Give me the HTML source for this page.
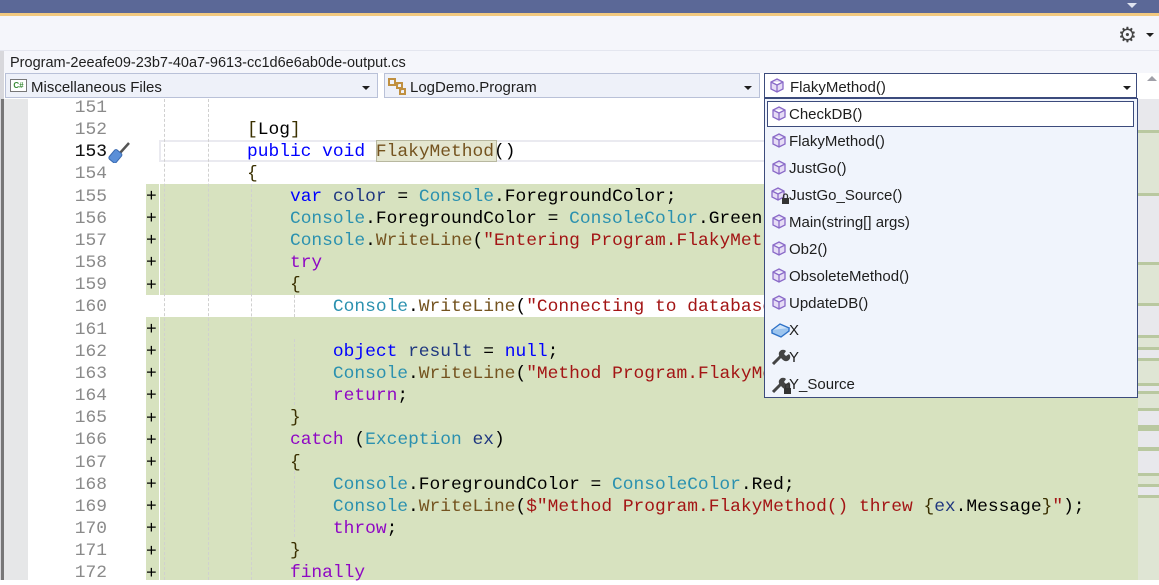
<!DOCTYPE html>
<html><head><meta charset="utf-8"><style>
*{margin:0;padding:0;box-sizing:border-box}
body{width:1159px;height:580px;overflow:hidden;background:#fff;position:relative;font-family:"Liberation Sans",sans-serif}
.a{position:absolute}
.code{font-family:"Liberation Mono",monospace;font-size:17.9px;white-space:pre;line-height:22px}
.ln{color:#8a8a8a;text-align:right;width:60px;left:47px}
.k{color:#0000ff}.t{color:#2b91af}.s{color:#a31515}.c{color:#8f08c4}.m{color:#74531f}.v{color:#1f377f}.b{color:#3a3000}
.cb{background:#eef1f9;border:1px solid #b9c1d8;height:25px;top:73px;font-size:15px;color:#1e1e1e}
.cb span.tx{position:absolute;left:25px;top:5px}
.arr{position:absolute;width:0;height:0;border-left:4px solid transparent;border-right:4px solid transparent;border-top:4px solid #1e1e1e}
.it{position:absolute;left:4px;height:26px;width:367px;font-size:15px;color:#1e1e1e}
.it span{position:absolute;left:20px;top:5px}
.it svg{position:absolute;left:2px;top:5px}
.guide{position:absolute;width:0;border-left:1px dashed #d0d0d0}
</style></head><body>
<div class="a" style="left:0;top:0;width:1159px;height:13px;background:#5b6897"></div>
<div class="a" style="left:0;top:13px;width:1159px;height:3px;background:#f2c97f"></div>
<div class="arr" style="left:1127px;top:3px;border-top-color:#dfe3f0;border-left-width:5px;border-right-width:5px;border-top-width:5px"></div>
<div class="a" style="left:0;top:16px;width:1159px;height:36px;background:#f5f6fb"></div>
<div class="a" style="left:1118px;top:23px;font-size:21px;color:#444">⚙</div>
<div class="arr" style="left:1146px;top:33px"></div>
<div class="a" style="left:0;top:50px;width:1159px;height:1px;background:#e4e6ef"></div>
<div class="a" style="left:0;top:51px;width:1159px;height:22px;background:#f5f6fb"></div>
<div class="a" style="left:10px;top:55px;font-size:14.5px;color:#1e1e1e">Program-2eeafe09-23b7-40a7-9613-cc1d6e6ab0de-output.cs</div>
<div class="a" style="left:0;top:51px;width:4px;height:529px;background:#d8d8dc"></div>

<div class="a cb" style="left:5px;width:373px"><div class="a" style="left:4px;top:5px;width:17px;height:13px;border:1px solid #777;background:#fff;font-size:8px;color:#388a34;text-align:center;line-height:11px;font-weight:bold">C#</div><span class="tx">Miscellaneous Files</span><div class="arr" style="right:7px;top:12px"></div></div>
<div class="a cb" style="left:384px;width:376px"><svg class="a" style="left:3px;top:3px" width="20" height="18"><g fill="none" stroke="#c09040" stroke-width="2"><rect x="1" y="2" width="6" height="6"/><rect x="9" y="6" width="5" height="5"/><rect x="12" y="12" width="5" height="5"/><path d="M7 6l3 2M13 11l1 2"/></g></svg><span class="tx">LogDemo.Program</span><div class="arr" style="right:7px;top:12px"></div></div>
<div class="a cb" style="left:764px;width:373px;background:#fff;border-color:#3c4b7c"><svg class="a" style="left:4px;top:4px" width="16" height="16"><path d="M8 1l6 3v7l-6 3-6-3V4z M2 4l6 3 6-3 M8 7v7" fill="#e6dcf5" stroke="#8a6ac8" stroke-width="1.3"/></svg><span class="tx">FlakyMethod()</span><div class="arr" style="right:5px;top:12px"></div></div>

<!-- editor -->
<div class="a" style="left:4px;top:99px;width:24px;height:481px;background:#e6e7e8"></div>
<div class="a" style="left:1px;top:99px;width:3px;height:481px;background:#777"></div>
<div class="a" style="left:146px;top:184px;width:13px;height:111px;background:#d7e2bf"></div>
<div class="a" style="left:160px;top:184px;width:978px;height:111px;background:#d7e2bf"></div>
<div class="a" style="left:146px;top:317px;width:13px;height:263px;background:#d7e2bf"></div>
<div class="a" style="left:160px;top:317px;width:978px;height:263px;background:#d7e2bf"></div>
<div class="a" style="left:159px;top:140px;width:610px;height:22px;border:2px solid #eaeaf0;border-right:none"></div>
<div class="guide" style="left:164px;top:99px;height:481px"></div>
<div class="guide" style="left:208px;top:99px;height:481px"></div>
<div class="guide" style="left:251px;top:184px;height:396px"></div>
<div class="guide" style="left:294px;top:295px;height:22px"></div>
<div class="guide" style="left:294px;top:339px;height:66px"></div>
<div class="guide" style="left:294px;top:471px;height:66px"></div>
<div class="a" style="left:376px;top:140px;width:121px;height:22px;background:#e4e6d0;border:1px solid #b8b8a0"></div>
<svg class="a" style="left:107px;top:141px" width="26" height="22"><path d="M13 12l9-10" stroke="#555" stroke-width="2.5" fill="none"/><rect x="4" y="9" width="9" height="12" rx="2" transform="rotate(40 8 15)" fill="#5a8fd8" stroke="#3a6ab0"/></svg>

<div class="a code ln" style="top:97px;line-height:22.15px">151
152
153
154
155
156
157
158
159
160
161
162
163
164
165
166
167
168
169
170
171
172</div>
<div class="a code" style="left:47px;top:141px;width:60px;text-align:right;color:#111">153</div>
<div class="a code" style="left:146px;top:186px;color:#000;line-height:22.15px">+
+
+
+
+

+
+
+
+
+
+
+
+
+
+
+
+</div>
<div class="a code" style="left:247px;top:97px;line-height:22.15px;color:#000">
<span class="b">[</span>Log<span class="b">]</span>
<span class="k">public</span> <span class="k">void</span> <span class="m">FlakyMethod</span>()
<span class="b">{</span>
    <span class="k">var</span> <span class="v">color</span> = <span class="t">Console</span>.ForegroundColor;
    <span class="t">Console</span>.ForegroundColor = <span class="t">ConsoleColor</span>.Green;
    <span class="t">Console</span>.<span class="m">WriteLine</span>(<span class="s">"Entering Program.FlakyMethod"</span>);
    <span class="c">try</span>
    <span class="b">{</span>
        <span class="t">Console</span>.<span class="m">WriteLine</span>(<span class="s">"Connecting to database..."</span>);

        <span class="k">object</span> <span class="v">result</span> = <span class="k">null</span>;
        <span class="t">Console</span>.<span class="m">WriteLine</span>(<span class="s">"Method Program.FlakyMethod()"</span>);
        <span class="c">return</span>;
    <span class="b">}</span>
    <span class="c">catch</span> (<span class="t">Exception</span> <span class="v">ex</span>)
    <span class="b">{</span>
        <span class="t">Console</span>.ForegroundColor = <span class="t">ConsoleColor</span>.Red;
        <span class="t">Console</span>.<span class="m">WriteLine</span>(<span class="s">$"Method Program.FlakyMethod() threw </span><span class="b">{</span><span class="v">ex</span>.Message<span class="b">}</span><span class="s">"</span>);
        <span class="c">throw</span>;
    <span class="b">}</span>
    <span class="c">finally</span></div>

<!-- scrollbar -->
<div class="a" style="left:1138px;top:99px;width:21px;height:481px;background:#e8e8ec"></div>
<div class="a" style="left:1147px;top:76px;width:0;height:0;border-left:5px solid transparent;border-right:5px solid transparent;border-bottom:5px solid #a0a0a8"></div>
<div class="a" style="left:1138px;top:130px;width:21px;height:66px;background:#dfe5d4;border-top:3px solid #b9c8a0;border-bottom:3px solid #b9c8a0"></div>
<div class="a" style="left:1138px;top:262px;width:21px;height:44px;background:#dfe5d4;border-top:3px solid #b9c8a0;border-bottom:3px solid #b9c8a0"></div>
<div class="a" style="left:1138px;top:335px;width:21px;height:15px;background:#dfe5d4;border-top:3px solid #b9c8a0;border-bottom:3px solid #b9c8a0"></div>
<div class="a" style="left:1138px;top:358px;width:21px;height:28px;background:#dfe5d4;border-top:3px solid #b9c8a0;border-bottom:3px solid #b9c8a0"></div>
<div class="a" style="left:1138px;top:391px;width:21px;height:20px;background:#dfe5d4;border-top:3px solid #b9c8a0;border-bottom:3px solid #b9c8a0"></div>
<div class="a" style="left:1138px;top:425px;width:21px;height:6px;background:#b9c8a0"></div>
<div class="a" style="left:1138px;top:447px;width:21px;height:4px;background:#b9c8a0"></div>
<div class="a" style="left:1138px;top:473px;width:21px;height:14px;background:#dfe5d4;border-top:3px solid #b9c8a0;border-bottom:3px solid #b9c8a0"></div>
<div class="a" style="left:1138px;top:495px;width:21px;height:85px;background:#dfe5d4;border-top:3px solid #b9c8a0"></div>

<!-- dropdown -->
<div class="a" style="left:764px;top:98px;width:374px;height:300px;background:#f0f4fc;border:1px solid #3c4b7c">
<div class="a" style="left:2px;top:2px;width:367px;height:26px;background:#fff;border:1px solid #3c4b7c"></div>
<div class="it" style="top:2px"><svg width="16" height="16"><path d="M8 1l6 3v7l-6 3-6-3V4z M2 4l6 3 6-3 M8 7v7" fill="#e6dcf5" stroke="#8a6ac8" stroke-width="1.3"/></svg><span>CheckDB()</span></div>
<div class="it" style="top:29px"><svg width="16" height="16"><path d="M8 1l6 3v7l-6 3-6-3V4z M2 4l6 3 6-3 M8 7v7" fill="#e6dcf5" stroke="#8a6ac8" stroke-width="1.3"/></svg><span>FlakyMethod()</span></div>
<div class="it" style="top:56px"><svg width="16" height="16"><path d="M8 1l6 3v7l-6 3-6-3V4z M2 4l6 3 6-3 M8 7v7" fill="#e6dcf5" stroke="#8a6ac8" stroke-width="1.3"/></svg><span>JustGo()</span></div>
<div class="it" style="top:83px"><svg width="20" height="18"><path d="M7 1l6 3v6l-6 3-6-3V4z M1 4l6 3 6-3 M7 7v6" fill="#e6dcf5" stroke="#8a6ac8" stroke-width="1.3"/><rect x="11" y="11" width="7" height="6" fill="#333"/><path d="M12.5 11v-2a2 2 0 0 1 4 0v2" stroke="#333" fill="none" stroke-width="1.3"/></svg><span>JustGo_Source()</span></div>
<div class="it" style="top:110px"><svg width="16" height="16"><path d="M8 1l6 3v7l-6 3-6-3V4z M2 4l6 3 6-3 M8 7v7" fill="#e6dcf5" stroke="#8a6ac8" stroke-width="1.3"/></svg><span>Main(string[] args)</span></div>
<div class="it" style="top:137px"><svg width="16" height="16"><path d="M8 1l6 3v7l-6 3-6-3V4z M2 4l6 3 6-3 M8 7v7" fill="#e6dcf5" stroke="#8a6ac8" stroke-width="1.3"/></svg><span>Ob2()</span></div>
<div class="it" style="top:164px"><svg width="16" height="16"><path d="M8 1l6 3v7l-6 3-6-3V4z M2 4l6 3 6-3 M8 7v7" fill="#e6dcf5" stroke="#8a6ac8" stroke-width="1.3"/></svg><span>ObsoleteMethod()</span></div>
<div class="it" style="top:191px"><svg width="16" height="16"><path d="M8 1l6 3v7l-6 3-6-3V4z M2 4l6 3 6-3 M8 7v7" fill="#e6dcf5" stroke="#8a6ac8" stroke-width="1.3"/></svg><span>UpdateDB()</span></div>
<div class="it" style="top:218px"><svg width="20" height="16"><path d="M1 8l8-6 9 4-8 7z" fill="#cfe3f8" stroke="#2e72c8" stroke-width="1.4"/><path d="M1 8v3l9 4 8-6V6" fill="#9cc4ee" stroke="#2e72c8" stroke-width="1.4"/></svg><span>X</span></div>
<div class="it" style="top:245px"><svg width="20" height="16"><path d="M2 15l8-8" stroke="#444" stroke-width="3"/><path d="M9 8a4 4 0 0 1 6-6l-2 3 2 2 3-2a4 4 0 0 1-6 6z" fill="#444"/></svg><span>Y</span></div>
<div class="it" style="top:272px"><svg width="22" height="18"><path d="M2 16l8-8" stroke="#444" stroke-width="3"/><path d="M9 9a4 4 0 0 1 6-6l-2 3 2 2 3-2a4 4 0 0 1-6 6z" fill="#444"/><rect x="13" y="12" width="7" height="6" fill="#333"/><path d="M14.5 12v-2a2 2 0 0 1 4 0v2" stroke="#333" fill="none" stroke-width="1.3"/></svg><span>Y_Source</span></div>
</div>
</body></html>
